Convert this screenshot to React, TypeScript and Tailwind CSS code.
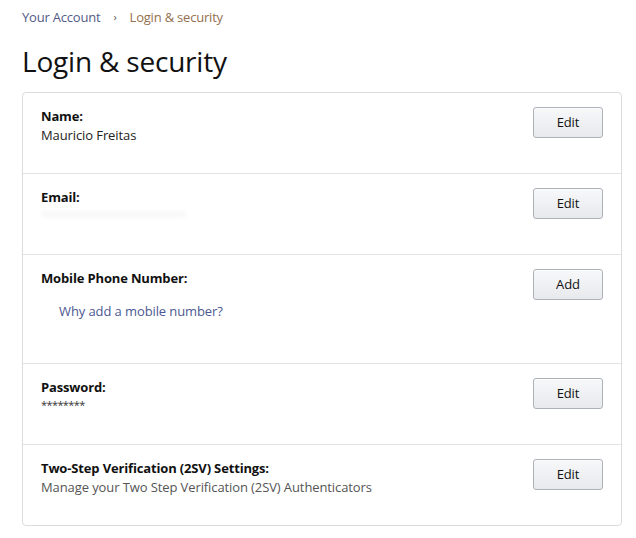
import React from "react";

function Btn({ label }: { label: string }) {
  return (
    <button className="w-[70px] h-[31px] rounded-[3px] border border-[#adb1b8] bg-gradient-to-b from-[#f7f8fa] to-[#e7e9ec] text-[13px] text-[#111] tracking-[-0.1px] shadow-[0_1px_0_rgba(255,255,255,0.6)_inset]">
      {label}
    </button>
  );
}

function Row({
  label,
  children,
  action,
  h,
  last,
}: {
  label: string;
  children?: React.ReactNode;
  action: string;
  h: string;
  last?: boolean;
}) {
  return (
    <div className={`flex justify-between pl-[18px] pr-[18px] ${last ? "" : "border-b border-[#e3e3e3]"} ${h}`}>
      <div className="pt-[14px]">
        <div className="text-[13px] font-bold text-[#111] leading-[18px] tracking-[-0.15px]">{label}</div>
        {children}
      </div>
      <div className="pt-[14px]">
        <Btn label={action} />
      </div>
    </div>
  );
}

export default function App() {
  return (
    <div
      className="w-[636px] h-[538px] bg-white px-[22px] pt-[8px]"
      style={{ fontFamily: '"Open Sans", "Noto Sans", Arial, sans-serif' }}
    >
      <div className="flex items-center text-[13px] leading-[18px] h-[18px] tracking-[-0.2px]">
        <span className="text-[#525a86]">Your Account</span>
        <span className="text-[#555] mx-[13px] text-[11px]">›</span>
        <span className="text-[#94704f]">Login &amp; security</span>
      </div>
      <h1 className="text-[28px] leading-[36px] text-[#111] mt-[17px] font-normal tracking-[-0.2px]">Login &amp; security</h1>
      <div className="mt-[13px] w-[600px] border border-[#dcdcdc] rounded-[4px]">
        <Row label="Name:" action="Edit" h="h-[81px]">
          <div className="text-[13px] text-[#222] leading-[18px] mt-[1px] tracking-[-0.1px]">Mauricio Freitas</div>
        </Row>
        <Row label="Email:" action="Edit" h="h-[81px]">
          <div className="mt-[5px] h-[6px] w-[145px] rounded-full bg-[#f7f7f9] blur-[2px]" />
        </Row>
        <Row label="Mobile Phone Number:" action="Add" h="h-[109px]">
          <div className="text-[13px] text-[#4c5893] leading-[18px] mt-[15px] ml-[18px] tracking-[-0.1px]">Why add a mobile number?</div>
        </Row>
        <Row label="Password:" action="Edit" h="h-[81px]">
          <div className="text-[11px] text-[#333] leading-[14px] mt-[2px] tracking-[-0.6px]">********</div>
        </Row>
        <Row label="Two-Step Verification (2SV) Settings:" action="Edit" h="h-[80px]" last>
          <div className="text-[13px] text-[#555] leading-[18px] mt-[1px] tracking-[-0.1px]">Manage your Two Step Verification (2SV) Authenticators</div>
        </Row>
      </div>
    </div>
  );
}
